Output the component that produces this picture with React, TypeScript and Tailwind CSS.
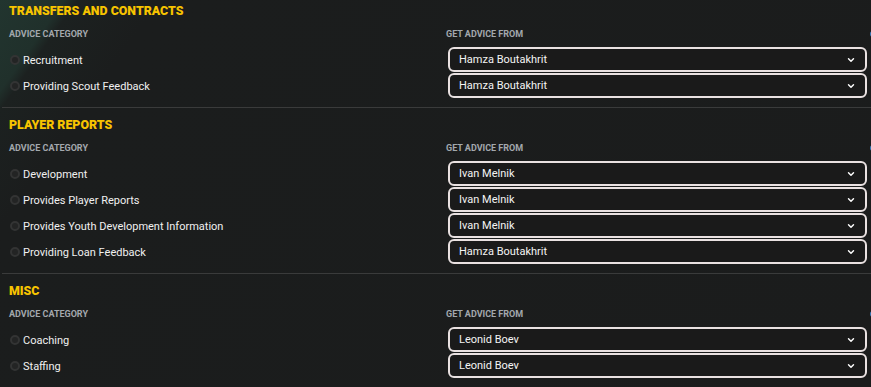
import { ChevronDown } from 'lucide-react'

type Row = { label: string; advisor: string }

const sections: { title: string; rows: Row[]; top: string }[] = [
  {
    title: 'Transfers and Contracts',
    top: 'pt-[4px]',
    rows: [
      { label: 'Recruitment', advisor: 'Hamza Boutakhrit' },
      { label: 'Providing Scout Feedback', advisor: 'Hamza Boutakhrit' },
    ],
  },
  {
    title: 'Player Reports',
    top: 'pt-[10px]',
    rows: [
      { label: 'Development', advisor: 'Ivan Melnik' },
      { label: 'Provides Player Reports', advisor: 'Ivan Melnik' },
      { label: 'Provides Youth Development Information', advisor: 'Ivan Melnik' },
      { label: 'Providing Loan Feedback', advisor: 'Hamza Boutakhrit' },
    ],
  },
  {
    title: 'Misc',
    top: 'pt-[10px]',
    rows: [
      { label: 'Coaching', advisor: 'Leonid Boev' },
      { label: 'Staffing', advisor: 'Leonid Boev' },
    ],
  },
]

function Select({ value }: { value: string }) {
  return (
    <div className="ml-[2px] flex h-[25px] items-center justify-between rounded-[6px] border-2 border-[#e9e1e1] bg-[#1a1a1a] pl-[9px] pr-[9px]">
      <span className="text-[11px] leading-none text-[#f4f4f4]">{value}</span>
      <ChevronDown className="h-[10px] w-[10px] text-white" strokeWidth={3.4} />
    </div>
  )
}

export default function App() {
  return (
    <main
      className="h-[387px] w-[871px] overflow-hidden bg-[#1b1c1c] bg-[linear-gradient(125deg,#22352f_0%,#20302b_5.6%,#1c2120_6.8%,#1b1d1d_14%,#1b1c1c_100%)] text-white"
      style={{ fontFamily: 'Roboto, "Liberation Sans", sans-serif' }}
    >
      {sections.map((section, i) => (
        <section key={section.title}>
          {i > 0 && <div className="ml-[2px] h-px bg-[#3a3b3b]" />}
          <div className={`pb-[8px] pl-[9px] pr-[4px] ${section.top}`}>
            <h2 className="h-[14px] text-[12.4px] font-black uppercase leading-[14px] text-[#f7c400]">
              {section.title}
            </h2>
            <div className="mt-[10px] grid h-[12px] grid-cols-[437px_1fr] items-center text-[9px] font-bold uppercase leading-[12px] text-[#a3a8ad]">
              <span>Advice Category</span>
              <div className="flex items-center justify-between">
                <span>Get Advice From</span>
                <span className="-mr-[9px] h-[6px] w-[6px] rounded-full bg-[#3b7fc0]" />
              </div>
            </div>
            <div className="mt-[7px] flex flex-col">
              {section.rows.map((row) => (
                <div key={row.label} className="grid h-[26px] grid-cols-[437px_1fr]">
                  <div className="flex h-[26px] items-center gap-[3px]">
                    <span className="ml-[1px] h-[10px] w-[10px] rounded-full border-2 border-[#333434] bg-[#232424]" />
                    <span className="text-[11px] leading-none text-[#f0f0f0]">{row.label}</span>
                  </div>
                  <Select value={row.advisor} />
                </div>
              ))}
            </div>
          </div>
        </section>
      ))}
    </main>
  )
}
